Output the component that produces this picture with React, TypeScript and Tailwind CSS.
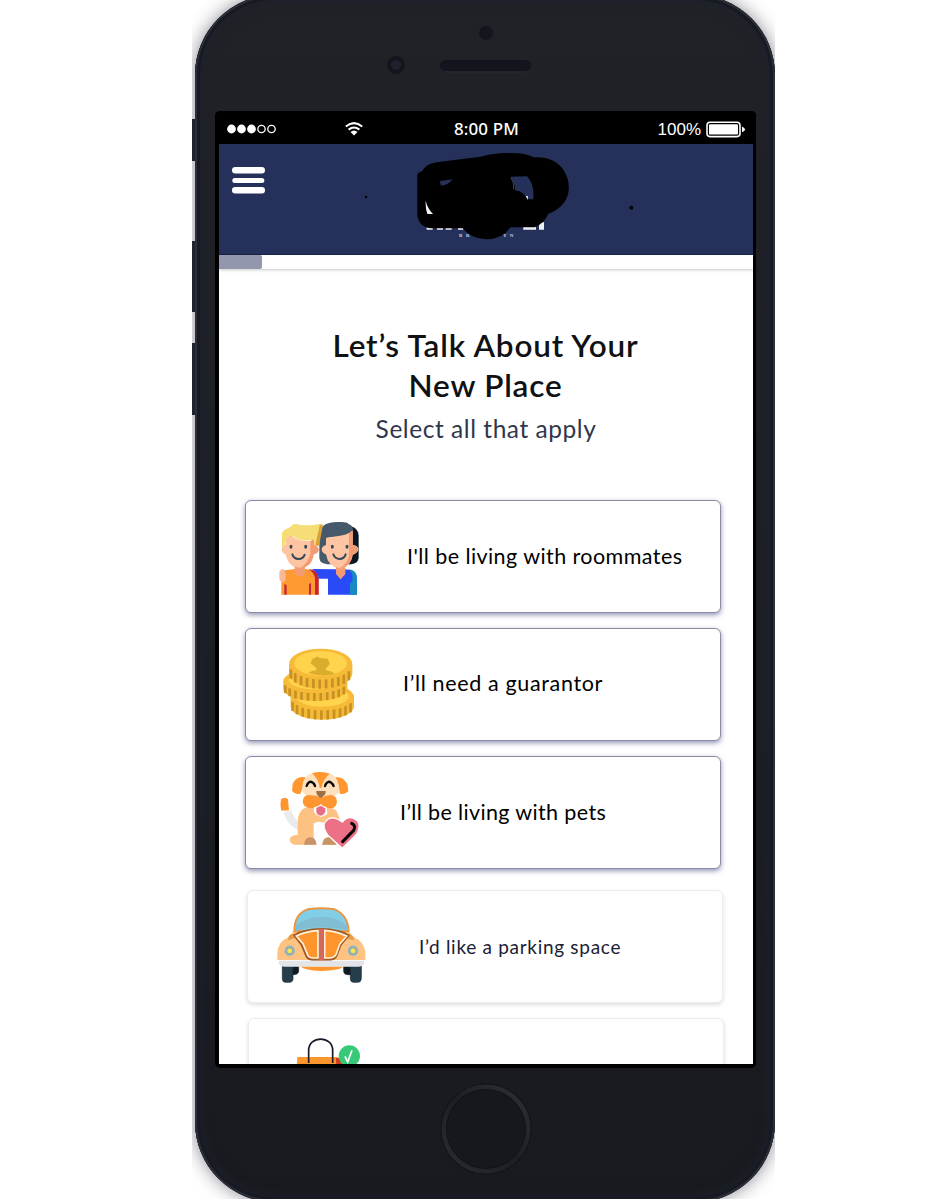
import React from "react";

const Roommates = () => (
  <svg viewBox="18 33 390 333" className="h-[111px] w-[130px] shrink-0">
    <path d="M238 205V135Q240 100 280 97Q300 94 322 98L330 108Q354 112 356 135V205Q354 221 334 223H262Q240 221 238 205Z" fill="#46596a" />
    <path d="M322 108Q354 112 355 137V205Q352 221 330 223L316 222L338 190V120Z" fill="#0b1520" />
    <path d="M258 165V141Q292 142 338 120V164Q355 167 355 178Q353 190 338 194Q332 232 298 235Q264 230 258 193Q245 189 245 178Q247 167 258 165Z" fill="#ffc5a3" />
    <path d="M245 141Q247 104 285 98Q310 94 325 102Q338 104 339 121Q320 137 290 139Q268 141 256 144V166L245 166Z" fill="#46596a" />
    <path d="M238 103L249 104L237 168L223 166Z" fill="#dda139" />
    <path d="M126 172V130Q128 120 147 113L163 101Q193 109 224 104L240 102L234 128L226 166H220L215 150Q178 155 160 139L137 151L134 172Z" fill="#f7dd75" />
    <path d="M137 165V150Q145 139 151 134Q170 153 211 153L222 148V165Q236 168 236 180Q234 190 221 193Q216 232 179 235Q145 232 137 193Q125 190 125 178Q127 165 137 165Z" fill="#ffc5a3" />
    <path d="M211 153L222 148V165Q236 168 236 180Q234 190 221 193Q216 232 181 234Q209 213 211 188Z" fill="#f39c73" />
    <path d="M327 130L338 122V164Q355 167 355 178Q353 190 338 194Q332 232 299 235Q326 218 327 193Z" fill="#f39c73" />
    <path d="M124 314V242L165 237Q168 252 179 253Q190 252 194 237L216 239Q236 243 236 264V314Z" fill="#ff9a33" />
    <path d="M206 238Q236 239 236 266V314H225V266Q224 249 206 238ZM207 283L213 278V314H207ZM133 281L140 286V314H133Z" fill="#c62536" />
    <path d="M216 237L288 238L302 268L316 238Q350 240 350 263V314H264V266H236Q235 248 216 237Z" fill="#294bf7" />
    <path d="M325 238Q351 240 351 266V314H337V266Q340 249 325 238ZM330 280L337 276V314H330Z" fill="#168bbf" />
    <path d="M164 228Q180 239 195 228V250Q180 271 164 250ZM288 231Q302 238 316 231V252L302 268L288 252Z" fill="#f39c73" />
    <path d="M131 237Q138 247 137 266Q135 276 127 276Q118 274 118 263V247Q119 238 131 237Z" fill="#f8b99a" />
    <g fill="#364956"><ellipse cx="153" cy="170" rx="4.5" ry="6" /><ellipse cx="197" cy="170" rx="4.5" ry="6" /><ellipse cx="277" cy="170" rx="4.5" ry="6" /><ellipse cx="321" cy="170" rx="4.5" ry="6" /></g>
    <path d="M157 193Q161 206 175 207Q190 207 194 194M280 193Q285 206 299 207Q313 206 317 193" fill="none" stroke="#364956" strokeWidth="6" strokeLinecap="round" />
  </svg>
);

const Coin = ({ cx, cy, rx, ry, h }: { cx: number; cy: number; rx: number; ry: number; h: number }) => {
  const side = `M${cx - rx} ${cy}V${cy + h}A${rx} ${ry} 0 0 0 ${cx + rx} ${cy + h}V${cy}Z`;
  const marks = [-0.94, -0.8, -0.62, -0.43, -0.23, -0.03, 0.17, 0.37, 0.56, 0.73, 0.89];
  return (
    <g>
      <path d={side} fill="#f1bb35" />
      {marks.map((m) => {
        const y = cy + ry * Math.sqrt(1 - m * m);
        return <path key={m} d={`M${cx + m * rx} ${y}v${h}`} stroke="#c98f24" strokeWidth="8" />;
      })}
      <ellipse cx={cx} cy={cy} rx={rx} ry={ry} fill="#f6ba38" />
      <ellipse cx={cx} cy={cy - 2} rx={rx - 16} ry={ry - 9} fill="#ffd34b" />
    </g>
  );
};

const Coins = () => (
  <svg viewBox="18 27 390 333" className="h-[111px] w-[130px] shrink-0">
    <Coin cx={247} cy={231} rx={95} ry={40} h={28} />
    <Coin cx={226} cy={183} rx={96} ry={36} h={24} />
    <Coin cx={242} cy={132} rx={95} ry={46} h={28} />
    <path d="M217 117L229 112L232 109L239 114L263 116L270 131L258 145V151Q280 155 284 162Q242 172 204 159Q216 151 229 151V144L212 130Z" fill="#dcac2d" />
  </svg>
);

const Dog = () => (
  <svg viewBox="18 27 390 333" className="h-[111px] w-[130px] shrink-0">
    <path d="M123 154Q133 144 144 154L147 187L124 188Q119 171 123 154Z" fill="#ff962f" />
    <path d="M130 192L154 187Q160 210 173 219V246Q142 231 130 192Z" fill="#ebebed" />
    <path d="M187 184Q213 171 243 174Q280 176 290 190L300 215L287 290H246L253 226Q238 216 221 226V290H163Q149 287 149 273Q153 260 173 261V219Q174 199 187 184Z" fill="#fdc181" />
    <path d="M223 291V239Q230 218 248 223L258 241L268 258V266Q250 268 246 291Z" fill="white" />
    <path d="M192 290Q194 269 211 268Q228 269 230 290ZM247 290Q248 268 268 268L290 290Z" fill="#c79367" />
    <path d="M196 88Q170 82 158 108L156 128Q164 139 181 138L191 110ZM287 88Q309 84 322 108L325 130Q315 140 300 137Z" fill="#ff962f" />
    <path d="M187 131Q184 87 216 76Q242 68 270 76Q297 88 299 132L284 143H200Z" fill="#ffe0bd" />
    <path d="M216 76Q242 67 269 77Q251 91 244 120H239Q237 94 216 76Z" fill="#ff962f" />
    <path d="M205 141Q190 142 188 160Q190 178 207 180H222Q235 180 242 169Q250 180 264 180H279Q289 176 291 162Q290 143 274 141L256 143Q244 152 230 143Z" fill="#ff962f" />
    <path d="M229 129H257Q258 141 244 149H240Q228 141 229 129Z" fill="#9e6e45" />
    <path d="M222 178Q233 177 242 169Q251 177 260 178L262 198Q250 207 242 206Q230 204 222 193Z" fill="white" />
    <path d="M229 180L242 173L256 181V192Q251 202 242 203Q231 201 229 192Z" fill="#e96c86" />
    <path d="M200 114Q204 102 212 101Q222 103 225 114M255 114Q258 103 267 101Q276 103 281 114" fill="none" stroke="#070707" strokeWidth="7" strokeLinecap="round" />
    <path d="M307 301L262 260Q244 231 258 219Q274 199 307 222Q329 198 352 218Q365 236 348 261Z" fill="#ec7187" stroke="#fff" strokeWidth="4" />
    <path d="M335 226Q349 233 341 247L308 281" fill="none" stroke="#050305" strokeWidth="9" strokeLinecap="round" />
  </svg>
);

const Car = () => (
  <svg viewBox="24 33 390 333" className="h-[111px] w-[130px] shrink-0">
    <g fill="#263e4c" stroke="#142631" strokeWidth="2">
      <path d="M150 259H176V275Q174 284 160 284H150ZM311 259H336V284H324Q311 284 311 273Z" fill="#0f1922" />
      <path d="M127 256H159V298Q158 307 149 307H137Q127 307 127 296ZM331 256H364V296Q363 307 353 307H340Q331 306 331 297Z" />
    </g>
    <path d="M180 259H312Q299 272 243 273Q196 272 180 259Z" fill="#ff962d" />
    <path d="M112 240V219Q113 185 146 171L161 153Q243 132 325 153L341 171Q374 185 376 220V240Z" fill="#fec383" />
    <path d="M145 176Q145 162 160 162L166 174L145 181ZM326 162Q342 165 342 181L322 176Z" fill="#e99a45" />
    <path d="M163 154Q163 101 203 88Q243 82 284 88Q324 105 326 154Z" fill="#83cee7" stroke="#e99745" strokeWidth="6" />
    <path d="M168 136Q202 110 244 110Q289 110 321 137L322 151Q244 132 167 152Z" fill="#81bdd3" />
    <path d="M158 165Q188 145 244 144Q301 145 330 165L304 197L292 229Q286 242 270 242H216Q202 242 196 229L182 196Z" fill="#a15a20" />
    <path d="M169 168Q197 154 234 152V234H220Q207 234 203 225L189 191ZM254 151Q293 155 320 168L299 193L288 224Q281 235 267 234H254Z" fill="#ff962d" stroke="#fff1dd" strokeWidth="5" />
    <path d="M237 146H251V242H237Z" fill="#d6675b" />
    <path d="M117 242H372V251Q367 260 355 260H136Q121 260 117 251Z" fill="#e3e4e7" />
    {[149, 339].map((x) => <g key={x}><circle cx={x} cy="212" r="16" fill="#9fb6b7" /><circle cx={x} cy="212" r="11" fill="#83a6b5" /><circle cx={x} cy="212" r="7.5" fill="#f5e64d" /></g>)}
  </svg>
);

const Bag = () => (
  <svg viewBox="192 57 390 333" className="h-[111px] w-[130px] shrink-0">
    <path d="M337 171H458L464 270H330Z" fill="#ff962d" />
    <path d="M452 174H475V270H462Z" fill="#d83a20" />
    <path d="M371 189V151C371 106 443 106 443 151V189" fill="none" stroke="#17182b" strokeWidth="5" />
    <circle cx="493" cy="168" r="32" fill="#37c878" />
    <path d="M480 169L488 186L501 151" fill="none" stroke="#fff" strokeWidth="5" />
  </svg>
);

const StatusBar = () => (
  <div className="flex h-[33px] shrink-0 items-center bg-black pl-[12px] pr-[10px] text-white">
    <svg viewBox="0 0 49 12" className="mt-[3px] h-[12px] w-[49px]">
      <circle cx="4.5" cy="6" r="4.4" fill="white" /><circle cx="14.5" cy="6" r="4.4" fill="white" /><circle cx="24.5" cy="6" r="4.4" fill="white" />
      <circle cx="34.5" cy="6" r="3.7" fill="none" stroke="white" strokeWidth="1.3" /><circle cx="44.5" cy="6" r="3.7" fill="none" stroke="white" strokeWidth="1.3" />
    </svg>
    <svg viewBox="0 0 18 14" className="ml-[69px] mt-[2px] h-[14px] w-[18px]" fill="none" stroke="white" strokeWidth="2">
      <path d="M.8 4.5Q9-2.3 17.2 4.5M3.6 7.6Q9 3.3 14.4 7.6" /><path d="M5.5 10Q9 7 12.5 10L9 13.4Z" fill="white" stroke="none" />
    </svg>
    <span className="ml-[91px] mt-[1px] whitespace-nowrap font-['Noto_Sans',sans-serif] text-[17px] font-medium leading-none tracking-[0.1px]">8:00 PM</span>
    <span className="ml-auto mt-[4px] font-['Liberation_Sans',sans-serif] text-[17px] leading-none">100%</span>
    <svg viewBox="0 0 40 17" className="ml-[5px] mt-[3px] h-[17px] w-[40px]">
      <rect x="1" y="1.2" width="33" height="14.4" rx="3" fill="none" stroke="white" strokeWidth="1.6" /><rect x="3" y="3.2" width="29" height="10.4" rx="1.2" fill="white" /><path d="M36 5.5Q39 7 39 8.4Q39 10 36 11.3Z" fill="white" />
    </svg>
  </div>
);

const Header = () => (
  <header className="flex h-[111px] shrink-0 items-start border-b border-[#1b2447] bg-[#25315b]">
    <svg viewBox="0 0 34 28" className="ml-[13px] mt-[22px] h-[28px] w-[34px]" fill="white">
      <rect x="0" y="1" width="33" height="6.6" rx="3.3" /><rect x="0.3" y="12" width="32" height="5" rx="2.5" /><rect x="0" y="21" width="33" height="6.4" rx="3.2" />
    </svg>
    <svg viewBox="0 12 1200 330" className="ml-[34px] h-[110px] w-[400px] shrink-0">
      <circle cx="198" cy="171" r="4" />
      <g transform="translate(300 0)">
        <g fill="#eef0f6"><path d="M80 254H98V269H80ZM111 254H129V269H111ZM137 254H155V269H137ZM174 254H190V269H174ZM370 250H408V269H370ZM417 247H432V269H417Z" /></g>
        <g fill="#cdd2e2" fontFamily="Liberation Serif, serif" fontWeight="700" fontSize="15"><text x="177" y="290">B</text><text x="198" y="290">R</text><text x="309" y="290">Y</text><text x="329" y="290">N</text></g>
        <path d="M52 103Q58 95 66 94Q77 72 110 67L242 50Q280 39 324 39Q378 38 401 52Q463 48 492 92Q511 123 505 158Q497 200 445 222Q432 250 405 262H331Q308 298 259 298Q213 297 188 265H91Q54 259 52 221Z" />
        <path d="M120 123L158 118Q141 139 122 136ZM332 110L381 109Q404 133 400 178H383Q369 153 345 151Q346 130 332 110Z" fill="#25315b" />
        <path d="M77 182Q83 206 99 222H82Q76 206 77 182ZM377 167L384 169L383 180Z" fill="#f1f2f6" />
        <path d="M333 113Q343 128 341 148" fill="none" stroke="#7882a0" strokeWidth="1.5" />
        <circle cx="694" cy="203" r="6" />
      </g>
    </svg>
  </header>
);

type OptionProps = { icon: React.ReactNode; label?: string; selected?: boolean; place: string; labelClass?: string };

const Option = ({ icon, label, selected, place, labelClass }: OptionProps) => (
  <div className={`${place} flex h-[113px] w-[476px] shrink-0 items-center rounded-[6px] border bg-white ${selected ? "border-[#8a8ca5] text-black shadow-[0_2px_5px_rgba(38,48,105,0.5)]" : "border-[#ededf0] text-[#1b2033] shadow-[0_2px_4px_rgba(0,0,0,0.13)]"}`}>
    {icon}
    {label && <span className={`whitespace-nowrap leading-none ${labelClass}`}>{label}</span>}
  </div>
);

export default function App() {
  return (
    <div className="h-[1200px] w-[950px] overflow-hidden bg-white font-['Lato','Open_Sans',sans-serif]">
      <div className="relative ml-[192px] h-[1199px] w-[583px] overflow-hidden pl-[3px]">
        <i className="absolute left-0 top-[119px] h-[42px] w-[4px] bg-[#262932]" />
        <i className="absolute left-0 top-[241px] h-[71px] w-[4px] bg-[#262932]" />
        <i className="absolute left-0 top-[343px] h-[72px] w-[4px] bg-[#262932]" />
        <div className="relative mt-[-5px] flex h-[1207px] w-[580px] flex-col rounded-[80px] bg-linear-to-b from-[#212227] via-[#1d1f26] to-[#191a1f] pl-[20px] shadow-[0_0_18px_rgba(20,20,40,0.5),inset_0_0_0_2px_#2c2f37,inset_0_0_0_5px_#171a22,inset_0_0_12px_6px_#1c222d]">
          <svg viewBox="0 0 541 116" className="h-[116px] w-[541px] shrink-0">
            <circle cx="271" cy="38" r="7" fill="#14161d" />
            <circle cx="181" cy="70" r="7" fill="#1d222e" stroke="#14161d" strokeWidth="4" />
            <rect x="225" y="65" width="91" height="11" rx="5.5" fill="#12151e" /><path d="M230 77H311" stroke="#2a2b30" />
          </svg>
          <main className="flex h-[957px] w-[541px] shrink-0 flex-col overflow-hidden rounded-[5px] bg-black pb-[4px]">
            <StatusBar />
            <div className="ml-[4px] flex min-h-0 w-[534px] grow flex-col overflow-hidden bg-white">
              <Header />
              <div className="h-[14px] w-full shrink-0 bg-white shadow-[0_1px_3px_rgba(0,0,0,0.22)]">
                <div className="h-[14px] w-[43px] rounded-r-[2px] bg-[#9397ad]" />
              </div>
              <h1 className="mt-[56px] shrink-0 pr-[1px] text-center text-[31.5px] font-semibold leading-[40px] tracking-[0.8px] text-[#101113]">Let’s Talk About Your<br />New Place</h1>
              <p className="mt-[8px] shrink-0 text-center text-[24.5px] leading-[32px] tracking-[0.55px] text-[#30374c]">Select all that apply</p>
              <div className="mt-[55px] flex flex-col">
                <Option selected place="ml-[26px]" icon={<Roommates />} label="I'll be living with roommates" labelClass="ml-[31px] text-[21.5px] tracking-[0.43px]" />
                <Option selected place="ml-[26px] mt-[15px]" icon={<Coins />} label="I’ll need a guarantor" labelClass="ml-[27px] mb-[2px] text-[21.5px] tracking-[0.65px]" />
                <Option selected place="ml-[26px] mt-[15px]" icon={<Dog />} label="I’ll be living with pets" labelClass="ml-[24px] text-[21.5px] tracking-[0.36px]" />
                <Option place="ml-[28px] mt-[21px]" icon={<Car />} label="I’d like a parking space" labelClass="ml-[41px] text-[19px] tracking-[0.7px]" />
                <Option place="ml-[29px] mt-[15px]" icon={<Bag />} />
              </div>
            </div>
          </main>
          <svg viewBox="0 0 541 139" className="h-[139px] w-[541px] shrink-0">
            <defs><linearGradient id="ring" x1="0" y1="1" x2="1" y2="0"><stop stopColor="#292c32" /><stop offset=".5" stopColor="#1c1e24" /><stop offset="1" stopColor="#2d3036" /></linearGradient></defs>
            <circle cx="271" cy="61" r="45.5" fill="#111318" /><circle cx="271" cy="61" r="42" fill="#17181d" stroke="url(#ring)" strokeWidth="5" /><circle cx="271" cy="61" r="39.5" fill="none" stroke="#101217" />
          </svg>
        </div>
      </div>
    </div>
  );
}
